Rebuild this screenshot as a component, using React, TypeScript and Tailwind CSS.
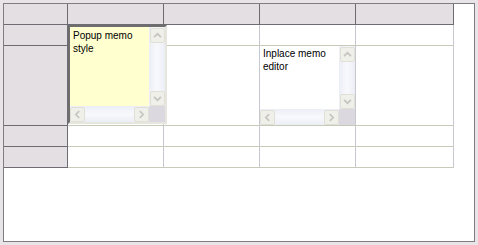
import React from "react";

const COLS = [96, 96, 96, 98];
const ROWS = [21, 80, 21, 21];

function Arrow({ dir }: { dir: "up" | "down" | "left" | "right" }) {
  const paths: Record<string, string> = {
    up: "M3.5 9.5 L7.5 5.5 L11.5 9.5",
    down: "M3.5 5.5 L7.5 9.5 L11.5 5.5",
    left: "M9.5 3.5 L5.5 7.5 L9.5 11.5",
    right: "M5.5 3.5 L9.5 7.5 L5.5 11.5",
  };
  return (
    <div className="w-[15px] h-[15px] shrink-0 rounded-[2px] border border-[#e0e0d6] bg-[#f0f0ea] flex items-center justify-center">
      <svg width="15" height="15" viewBox="0 0 15 15">
        <path d={paths[dir]} fill="none" stroke="#c6c6be" strokeWidth="2" />
      </svg>
    </div>
  );
}

function VScroll() {
  return (
    <div className="w-[16px] flex flex-col items-center pt-[1px] bg-gradient-to-r from-[#eceef6] via-[#f8f9fc] to-[#eceef6]">
      <Arrow dir="up" />
      <div className="flex-1" />
      <Arrow dir="down" />
    </div>
  );
}

function HScroll() {
  return (
    <div className="h-[16px] flex shrink-0">
      <div className="flex-1 flex items-center bg-gradient-to-b from-[#eceef6] via-[#f8f9fc] to-[#eceef6]">
        <Arrow dir="left" />
        <div className="flex-1" />
        <Arrow dir="right" />
      </div>
      <div className="w-[16px] bg-[#dcd8e0]" />
    </div>
  );
}

function MemoBody({ text, bg, pad }: { text: string; bg: string; pad: string }) {
  return (
    <div className="flex flex-col h-full w-full">
      <div className="flex flex-1 min-h-0">
        <div className={`flex-1 pl-[3px] ${pad} ${bg}`}>{text}</div>
        <VScroll />
      </div>
      <HScroll />
    </div>
  );
}

export default function App() {
  return (
    <div
      className="w-[478px] h-[245px] bg-[#e8e4e8] p-[3px] text-black text-[10px] leading-[13px]"
      style={{ fontFamily: '"Liberation Sans", Arial, sans-serif' }}
    >
      <div className="relative h-[239px] border border-[#7e7e7e] bg-white">
        {/* header */}
        <div className="flex h-[21px]">
          <div className="w-[64px] bg-[#e3dfe3] border-r border-b border-[#6f6b73]" />
          {COLS.map((w, i) => (
            <div
              key={i}
              style={{ width: w }}
              className="bg-[#e3dfe3] border-r border-b border-[#6f6b73]"
            />
          ))}
        </div>

        {ROWS.map((h, r) => (
          <div key={r} className="flex" style={{ height: h }}>
            <div className="w-[64px] bg-[#e3dfe3] border-r border-b border-[#6f6b73]" />
            {COLS.map((w, c) => (
              <div
                key={c}
                style={{ width: w }}
                className="border-r border-r-[#c8c8d0] border-b border-b-[#c6cab9] overflow-hidden"
              >
                {r === 1 && c === 2 && (
                  <MemoBody text="Inplace memo editor" bg="bg-white" pad="pt-[1px]" />
                )}
              </div>
            ))}
          </div>
        ))}

        {/* popup memo */}
        <div className="absolute left-[64px] top-[21px] w-[99px] h-[99px] border-l-2 border-t-2 border-l-[#6e6e6e] border-t-[#6e6e6e] border-r-2 border-b-2 border-r-[#e6e6de] border-b-[#e6e6de] bg-[#ffffd0]">
          <MemoBody text="Popup memo style" bg="bg-[#ffffd0]" pad="pt-[2px]" />
        </div>
      </div>
    </div>
  );
}
